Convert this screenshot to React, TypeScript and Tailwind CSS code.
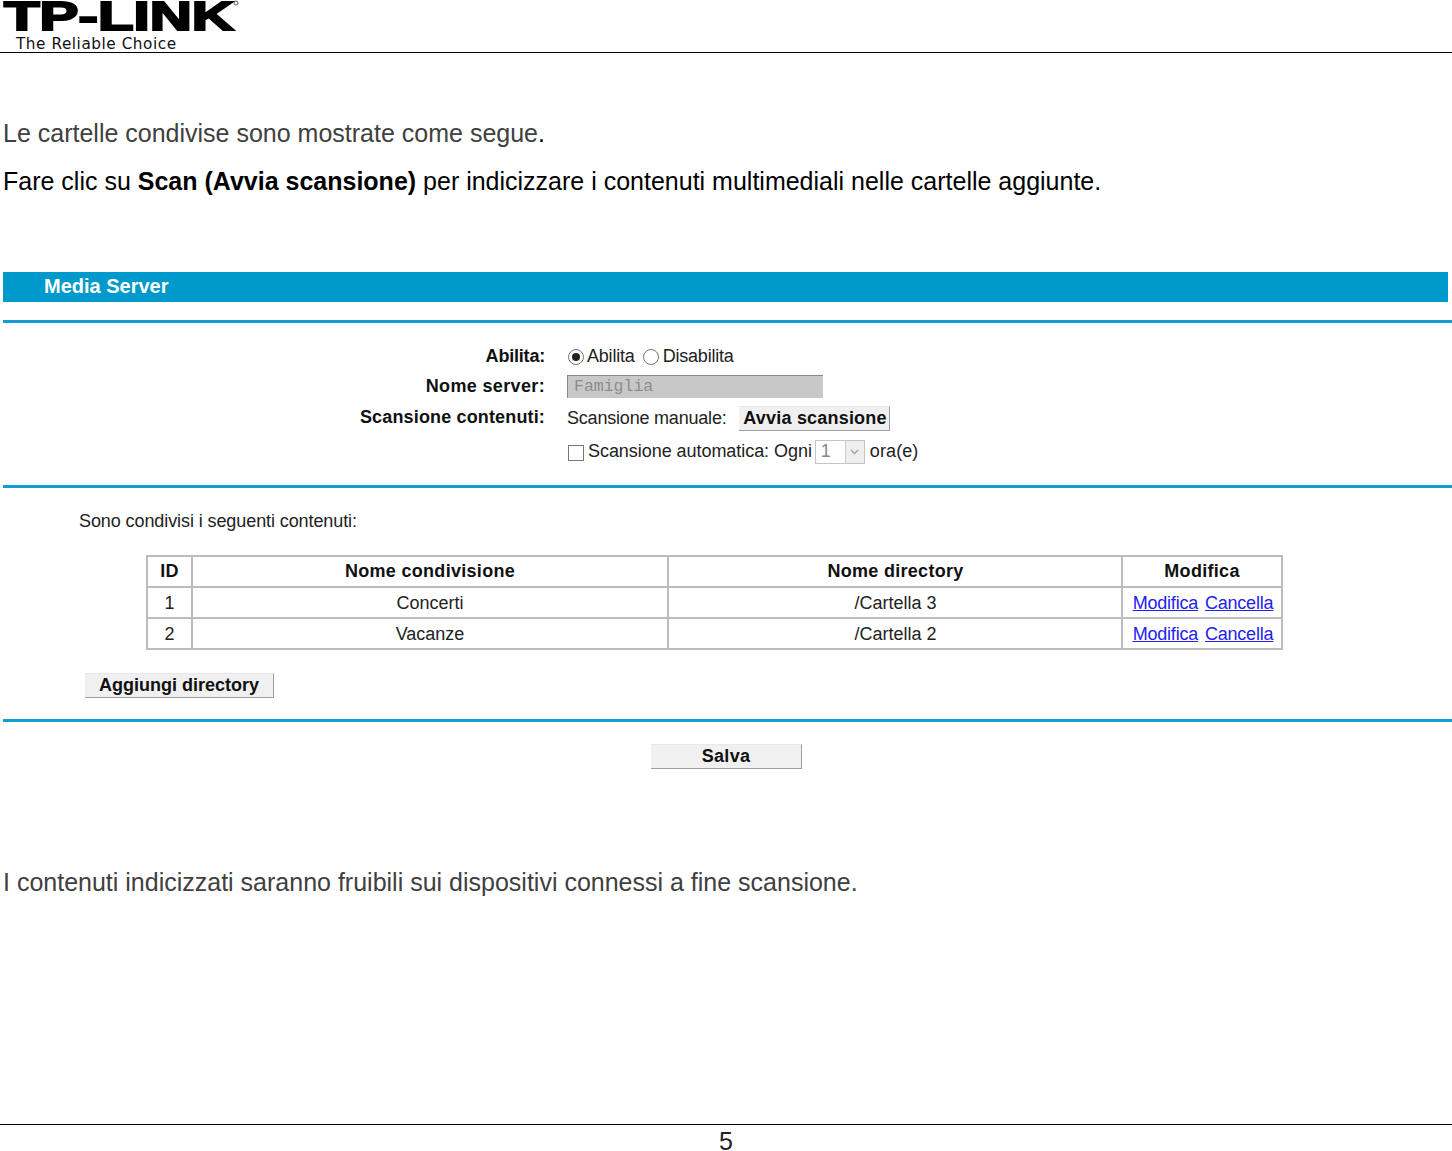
import React from "react";

const rows = [
  { id: "1", name: "Concerti", dir: "/Cartella 3" },
  { id: "2", name: "Vacanze", dir: "/Cartella 2" },
];

function Rule() {
  return <div className="h-[3px] ml-[3px] bg-[#0f9fd3]" />;
}

function Btn({ label, className }: { label: string; className: string }) {
  return (
    <div
      className={`flex items-center justify-center bg-[#f0f0f0] border-r border-b border-[#a0a0a0] border-t border-t-[#e8e8e8] font-bold text-[18px] text-[#111] ${className}`}
    >
      {label}
    </div>
  );
}

export default function App() {
  return (
    <div className="w-[1452px] h-[1151px] bg-white flex flex-col overflow-hidden font-['Liberation_Sans',Arial,sans-serif] text-[#222]">
      {/* Header */}
      <div className="h-[53px] shrink-0 border-b border-black relative overflow-hidden">
        <svg width="245" height="34" viewBox="0 0 245 34" className="block">
          <text
            x="4"
            y="29.5"
            fontFamily="Liberation Sans"
            fontWeight="700"
            fontSize="40"
            textLength="230"
            lengthAdjust="spacingAndGlyphs"
            fill="#000"
            stroke="#000"
            strokeWidth="2"
          >
            TP-LINK
          </text>
          <circle cx="236" cy="3" r="2" fill="none" stroke="#333" strokeWidth="0.8" />
        </svg>
        <div className="absolute left-[16px] top-[36px] text-[15.5px] leading-[17px] tracking-[0.55px] font-['DejaVu_Sans',sans-serif] text-[#111] scale-x-[0.985] origin-left whitespace-nowrap">
          The Reliable Choice
        </div>
      </div>

      <div className="flex-1 flex flex-col">
        {/* Intro */}
        <p className="pl-[3px] mt-[64px] text-[25px] leading-[32px] text-[#404040]">
          Le cartelle condivise sono mostrate come segue<span className="text-black">.</span>
        </p>
        <p className="pl-[3px] mt-[16px] text-[25px] leading-[32px] text-black">
          Fare clic su <b>Scan (Avvia scansione)</b> per indicizzare i contenuti multimediali nelle cartelle aggiunte.
        </p>

        {/* Media Server panel */}
        <div className="mt-[75px] ml-[3px] mr-[4px] h-[30px] pb-[2px] bg-[#0099cc] flex items-center pl-[41px] text-white font-bold text-[20px]">
          Media Server
        </div>
        <div className="mt-[18px]"><Rule /></div>

        <div className="grid grid-cols-[545px_1fr] gap-x-[22px] mt-[18px] text-[18px] tracking-[-0.2px]">
          <div className="h-[30px] flex items-center justify-end font-bold text-[#111] tracking-[-0.2px]">Abilita:</div>
          <div className="h-[30px] flex items-center">
            <span className="w-[16px] h-[16px] ml-px rounded-full border border-[#777] flex items-center justify-center mt-[2px]">
              <span className="w-[8px] h-[8px] rounded-full bg-[#222]" />
            </span>
            <span className="ml-[3px]">Abilita</span>
            <span className="w-[16px] h-[16px] rounded-full border border-[#777] ml-[8px] mt-[2px]" />
            <span className="ml-[4px]">Disabilita</span>
          </div>

          <div className="h-[31px] flex items-center justify-end font-bold text-[#111] tracking-[0.35px]">Nome server:</div>
          <div className="h-[31px] flex items-center">
            <div className="w-[256px] h-[23px] bg-[#c8c8c8] border-l border-t border-[#8a8a8a] pl-[6px] font-['Liberation_Mono',monospace] text-[16.5px] tracking-normal leading-[22px] text-[#8c8c8c]">
              Famiglia
            </div>
          </div>

          <div className="h-[33px] flex items-center justify-end font-bold text-[#111] pb-[3px] tracking-[0.15px]">Scansione contenuti:</div>
          <div className="h-[33px] flex items-center">
            <span>Scansione manuale:</span>
            <Btn label="Avvia scansione" className="ml-[12px] w-[151px] h-[25px] pl-[3px] tracking-[0.2px]" />
          </div>

          <div />
          <div className="h-[33px] flex items-center">
            <span className="w-[16px] h-[16px] ml-px border border-[#777] mt-[2px]" />
            <span className="ml-[4px] tracking-[-0.05px]">Scansione automatica: Ogni</span>
            <div className="ml-[3px] w-[50px] h-[24px] border border-[#c4c4c4] flex items-center pl-[5px] text-[#888]">
              <span className="flex-1">1</span>
              <span className="w-[19px] h-full bg-[#eeeeee] border-l border-[#cfcfcf] flex items-center justify-center">
                <svg width="9" height="6" viewBox="0 0 9 6"><path d="M1 1l3.5 3.5L8 1" fill="none" stroke="#a0a0a0" strokeWidth="1.3" /></svg>
              </span>
            </div>
            <span className="ml-[5px] tracking-[0.1px]">ora(e)</span>
          </div>
        </div>

        <div className="mt-[17px]"><Rule /></div>

        {/* Shared content */}
        <div className="pl-[79px] mt-[22px] text-[18px] leading-[22px] tracking-[-0.09px] text-[#222]">
          Sono condivisi i seguenti contenuti:
        </div>

        <table className="ml-[146px] mt-[23px] w-[1135px] table-fixed border-collapse text-[18px] text-center">
          <colgroup>
            <col className="w-[45px]" />
            <col className="w-[476px]" />
            <col className="w-[454px]" />
            <col className="w-[160px]" />
          </colgroup>
          <thead>
            <tr className="h-[31px] font-bold text-[#111] tracking-[0.3px]">
              <th className="border-2 border-[#bcbcbc]">ID</th>
              <th className="border-2 border-[#bcbcbc]">Nome condivisione</th>
              <th className="border-2 border-[#bcbcbc] pl-px">Nome directory</th>
              <th className="border-2 border-[#bcbcbc]">Modifica</th>
            </tr>
          </thead>
          <tbody>
            {rows.map((r) => (
              <tr key={r.id} className="h-[31px]">
                <td className="border-2 border-[#bcbcbc] pt-px">{r.id}</td>
                <td className="border-2 border-[#bcbcbc] pt-px">{r.name}</td>
                <td className="border-2 border-[#bcbcbc] pt-px pl-px">{r.dir}</td>
                <td className="border-2 border-[#bcbcbc] pt-px pl-[2px]">
                  <div className="flex justify-center gap-[7px] text-[#2222ee] underline tracking-[-0.22px] whitespace-nowrap">
                    <a>Modifica</a>
                    <a>Cancella</a>
                  </div>
                </td>
              </tr>
            ))}
          </tbody>
        </table>

        <Btn label="Aggiungi directory" className="ml-[85px] mt-[23px] w-[189px] h-[25px]" />

        <div className="mt-[21px]"><Rule /></div>

        <Btn label="Salva" className="self-start ml-[651px] mt-[22px] w-[151px] h-[25px] tracking-[0.3px]" />

        <p className="pl-[3px] mt-[97px] text-[25px] leading-[32px] text-[#404040]">
          I contenuti indicizzati saranno fruibili sui dispositivi connessi a fine scansione.
        </p>
      </div>

      {/* Footer */}
      <div className="h-[27px] shrink-0 border-t border-black pt-[6px] text-center text-[25px] leading-[20px] text-[#222]">
        5
      </div>
    </div>
  );
}
